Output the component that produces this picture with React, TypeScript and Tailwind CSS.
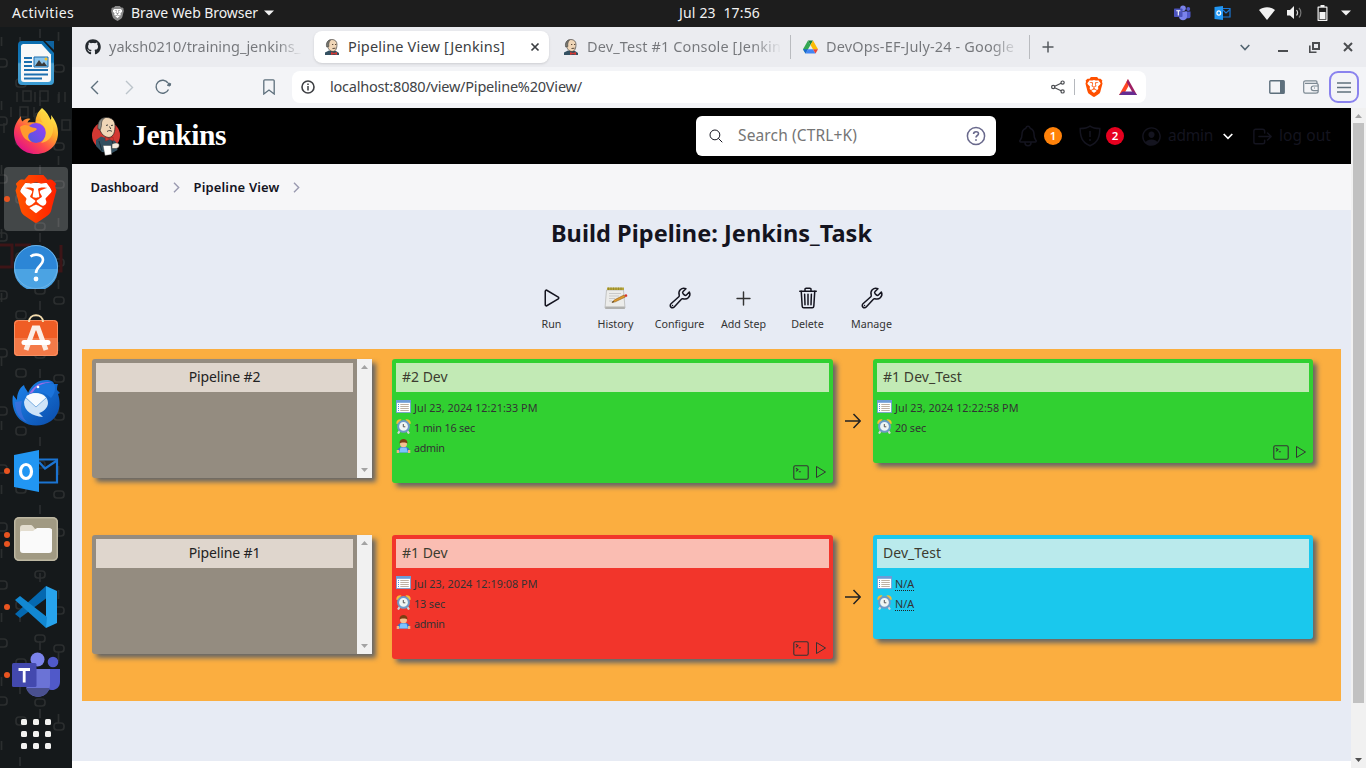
import type { ReactNode } from 'react';
import { FaGithub } from 'react-icons/fa';
import { SiBrave } from 'react-icons/si';
import {
  IoAddOutline,
  IoBuildOutline,
  IoHelpCircleOutline,
  IoLogOutOutline,
  IoNotificationsOutline,
  IoPersonCircleOutline,
  IoPlayOutline,
  IoSearchOutline,
  IoTrashOutline,
} from 'react-icons/io5';

/* ---------- shared drawings ---------- */

function BraveLogo({ size, from, to, id }: { size: number; from: string; to: string; id: string }) {
  return (
    <svg width={size} height={size} viewBox="0 0 24 24" className="shrink-0">
      <defs>
        <linearGradient id={id}>
          <stop offset="0" stopColor={from} />
          <stop offset="1" stopColor={to} />
        </linearGradient>
      </defs>
      <path d="M6 4h12l2 4-2 9-6 5-6-5-2-9z" fill="#fff" />
      <SiBrave size={24} style={{ fill: `url(#${id})` }} />
    </svg>
  );
}

function Butler() {
  return (
    <svg width="28" height="40" viewBox="0 0 28 40" className="shrink-0">
      <circle cx="14" cy="19.500" r="14" fill="#d33833" />
      <path d="M4 24l5-3.500 6 2 5 0 4 3.500 1.500 8-5.500 3-10-1-6-6z" fill="#335061" />
      <path d="M7 25l3 10M20 24l1 6" stroke="#1d2f3a" strokeWidth="1" />
      <path d="M6.500 9C6.500 4 10 1.500 14.500 1.500S23 4 23 9.500c0 6-1 11-6 12-6-.5-9-5-10.500-12.500z" fill="#f0d6b7" stroke="#222" strokeWidth=".7" />
      <path d="M6 13C5.300 6.500 8 2.300 13 1.500 10.500 3 9 6 9.500 9.500l-1 4z" fill="#8b8b86" stroke="#222" strokeWidth=".5" />
      <path d="M14 9.500l2-.6M19 9.500l2-.3M15 15.500c2-1.500 4-1 5 0M17.500 10.500l1.300 2.500" stroke="#333" strokeWidth=".9" fill="none" />
      <path d="M13 21l4 1.500 4-1.500.5 4-4-1.500-4 1.500z" fill="#d33833" stroke="#81211c" strokeWidth=".4" />
      <path d="M11 29.500h8l.7 9-6.700 1z" fill="#fff" stroke="#333" strokeWidth=".4" />
      <path d="M20 28c3-1.500 5.500-1.500 7 0 .5 2 0 4-3 4.500h-4z" fill="#f5ebdf" stroke="#333" strokeWidth=".5" />
    </svg>
  );
}

function ButlerHead() {
  return (
    <svg width="16" height="16" viewBox="0 0 16 16" className="shrink-0">
      <path d="M1 16v-2.500l4-2 7 .5 3 2V16z" fill="#335061" />
      <path d="M3 5C3 2 5 .5 8 .5s5 2 5 5-1 7-4 7-5.500-3-6-7.500z" fill="#f0d6b7" stroke="#2b2b2b" strokeWidth=".6" />
      <path d="M2.600 8C1.800 4 3.500 1.500 6.500 1 5 3 4.500 5 5 7.500z" fill="#77776f" stroke="#2b2b2b" strokeWidth=".4" />
      <path d="M8 5.500h1.300M11 5.500h1.300M8.500 9.500l3-.3" stroke="#4b3a2c" strokeWidth=".9" />
      <path d="M7 13l3 1 3-1v3l-3-1-3 1z" fill="#d33833" />
    </svg>
  );
}

function DriveIcon() {
  return (
    <svg width="15" height="14" viewBox="0 0 15 14" className="shrink-0">
      <path d="M5 .5h5L7.500 5z" fill="#188038" />
      <path d="M5 .5L0 9.300l2.500 4.200 5-8.500z" fill="#34a853" />
      <path d="M10 .5L15 9.300H10L7.500 5z" fill="#fbbc04" />
      <path d="M0 9.300h5l-2.500 4.200z" fill="#1967d2" />
      <path d="M5 9.300h5l2.500 4.200h-10z" fill="#4285f4" />
      <path d="M10 9.300h5l-2.500 4.200z" fill="#ea4335" />
    </svg>
  );
}

/* ---------- desktop top bar ---------- */

function TopBar() {
  return (
    <header className="flex h-[27px] shrink-0 items-center bg-[#1d1d1d] pb-[1px] text-[14px] leading-[24px] text-[#f2f2f2]">
      <span className="ml-3 w-[62px] whitespace-nowrap tracking-[0.37px]">Activities</span>
      <span className="ml-9">
        <BraveLogo size={15} from="#8c8c8c" to="#8c8c8c" id="brave-gray" />
      </span>
      <span className="ml-[6px] w-[127px] whitespace-nowrap tracking-[-0.07px]">Brave Web Browser</span>
      <svg width="10" height="6" viewBox="0 0 10 6" className="ml-[6px]"><path d="M0 .5h10L5 5.500z" fill="#f2f2f2" /></svg>
      <span className="ml-[405px] w-[82px] whitespace-pre tracking-[0.17px]">Jul 23  17:56</span>
      <svg width="17" height="16" viewBox="0 0 17 16" className="ml-[413px]">
        <circle cx="9" cy="3.200" r="2.800" fill="#7b83eb" />
        <circle cx="14.300" cy="4" r="1.900" fill="#5059c9" />
        <path d="M11 6.500h5.500v5c0 2-3.500 2.500-5.500 1z" fill="#5059c9" />
        <path d="M5 6.500h8v5c0 5-8 5-8 0z" fill="#7b83eb" />
        <rect x="0" y="3.500" width="8.500" height="8.500" rx=".7" fill="#4b53bc" />
        <path d="M2.300 5.800h4M4.300 5.800v4.600" stroke="#fff" strokeWidth="1.100" />
      </svg>
      <svg width="17" height="16" viewBox="0 0 17 16" className="ml-[23px]">
        <path d="M8 3.500h8v8.500H8z" fill="none" stroke="#1b78d6" strokeWidth="1.200" />
        <path d="M9 5l3 3 4-3.500" fill="none" stroke="#1b78d6" strokeWidth="1.200" />
        <path d="M.5 2L9 1v14l-8.500-1z" fill="#2196f3" />
        <ellipse cx="4.800" cy="8" rx="1.900" ry="2.200" fill="none" stroke="#fff" strokeWidth="1.200" />
      </svg>
      <svg width="16" height="13" viewBox="0 0 16 13" className="ml-[28px]"><path d="M0 3C4.500-.8 11.500-.8 16 3L8 13z" fill="#f2f2f2" /></svg>
      <svg width="16" height="14" viewBox="0 0 16 14" className="ml-[12px]">
        <path d="M0 4h3l4-4v13L3 9.500H0z" fill="#f2f2f2" />
        <path d="M9.500 4c1.200 1.500 1.200 4 0 5.500" fill="none" stroke="#cfcfcf" strokeWidth="1.200" />
        <path d="M12 2c2.500 2.500 2.500 7 0 9.500" fill="none" stroke="#777" strokeWidth="1.200" />
      </svg>
      <svg width="11" height="16" viewBox="0 0 11 16" className="ml-[14px]">
        <path d="M3.500 0h4v1.500h2c.8 0 1 .3 1 1V15c0 .7-.2 1-1 1h-8c-.8 0-1-.3-1-1V2.500c0-.7.2-1 1-1h2z" fill="#f2f2f2" />
        <path d="M1.700 2.700h7.600v12H1.700z" fill="#1d1d1d" />
        <path d="M2.500 7h6v7h-6z" fill="#f2f2f2" />
      </svg>
      <svg width="10" height="6" viewBox="0 0 10 6" className="ml-[13px]"><path d="M0 .5h10L5 5.500z" fill="#f2f2f2" /></svg>
    </header>
  );
}

/* ---------- dock ---------- */

function WriterIcon() {
  return (
    <svg width="38" height="46" viewBox="0 0 38 46">
      <defs>
        <linearGradient id="writer" x2="0" y2="1">
          <stop offset="0" stopColor="#0b6cae" /><stop offset=".48" stopColor="#1579b8" />
          <stop offset=".52" stopColor="#4d9fcd" /><stop offset="1" stopColor="#3a9bd3" />
        </linearGradient>
      </defs>
      <path d="M5 1h21l11 12v28a4 4 0 0 1-4 4H5a4 4 0 0 1-4-4V5a4 4 0 0 1 4-4z" fill="url(#writer)" />
      <path d="M28 1h9v9z" fill="#0f63a0" />
      <path d="M6.500 4h18L34 14.500V39a3 3 0 0 1-3 3H7a3 3 0 0 1-3-3V6.500C4 5 5 4 6.500 4z" fill="#f8f8f8" />
      <path d="M7 18h8M7 22h8M7 26h8M7 30h24M7 34.500h24M7 38.500h18" stroke="#1b6faf" strokeWidth="1.800" />
      <path d="M17 17h14v10H17z" fill="#8cc5ec" stroke="#1b6faf" />
      <path d="M18 26l4-6 3 4 2-2 3 4z" fill="#3a3a3a" />
      <circle cx="29" cy="19" r="1.500" fill="#f6c12c" />
    </svg>
  );
}

function FirefoxIcon() {
  return (
    <svg width="46" height="48" viewBox="0 0 46 48">
      <defs>
        <linearGradient id="ff-body" x1=".85" y1=".1" x2=".2" y2=".95">
          <stop offset="0" stopColor="#fff14f" /><stop offset=".35" stopColor="#ffa52a" />
          <stop offset=".65" stopColor="#ff4a4a" /><stop offset="1" stopColor="#e0108a" />
        </linearGradient>
        <linearGradient id="ff-globe" x1="1" x2="0" y2="1">
          <stop offset="0" stopColor="#9b3dfb" /><stop offset="1" stopColor="#4a5cd8" />
        </linearGradient>
      </defs>
      <path d="M29 1c5 4 7 8 8.500 12 1-1 .8-3 .5-5 5 6 7 12 7 18 0 12-9 21-22 21S1 38 1 26C1 19 4 14 8 9c0 2 0 4 1.500 5.500 3-3 5-3.500 8-2.500-1.500 1-2.500 2-3 3.500 2-.5 5-.5 8 0 0-6 2.500-11 6.500-14.500z" fill="url(#ff-body)" />
      <circle cx="23" cy="26" r="10" fill="url(#ff-globe)" />
      <path d="M7 20c4-3 8-2 11 0 2 1 4 0 6 2-2 3-6 3-8 5-2 3 0 6 3 8-7-1-11-7-12-15z" fill="#ff9a2e" />
      <path d="M22 15c4 0 8 2 10 6 2 5 0 11-4 15 8-1 13-8 12-16s-6-12-10-16c-4 4-3 8 0 12-2-1-5-2-8-1z" fill="#ffd23e" opacity=".75" />
    </svg>
  );
}

function HelpIcon() {
  return (
    <svg width="44" height="44" viewBox="0 0 44 44">
      <circle cx="22" cy="22" r="22" fill="#2c86d6" />
      <path d="M0 24h44a22 22 0 0 1-44 0z" fill="#4ba3e3" />
      <circle cx="22" cy="22" r="21.500" fill="none" stroke="#6db3e6" />
      <path d="M16.500 11.500c4-3 12.500-2.500 12.500 3.500 0 6-7 6-7 13" fill="none" stroke="#fff" strokeWidth="2.600" />
      <circle cx="22" cy="34" r="2.400" fill="#fff" />
    </svg>
  );
}

function SoftwareIcon() {
  return (
    <svg width="44" height="44" viewBox="0 0 44 44">
      <rect y="7" width="44" height="36" rx="4" fill="#ef5d25" />
      <path d="M0 25h44v14a4 4 0 0 1-4 4H4a4 4 0 0 1-4-4z" fill="#f47a48" />
      <rect x=".5" y="7.500" width="43" height="35" rx="4" fill="none" stroke="#f89165" />
      <path d="M15 9c0-9 14-9 14 0" fill="none" stroke="#f3dcae" strokeWidth="2" />
      <path d="M12 37l8-22h4l8 22" fill="none" stroke="#fbeee6" strokeWidth="5" />
      <path d="M10 29.500h24" stroke="#fff" strokeWidth="5" strokeLinecap="round" />
    </svg>
  );
}

function ThunderbirdIcon() {
  return (
    <svg width="48" height="46" viewBox="0 0 48 46">
      <defs>
        <linearGradient id="tb" x2="1" y2="1"><stop offset="0" stopColor="#1e88f0" /><stop offset="1" stopColor="#0a4aa8" /></linearGradient>
      </defs>
      <path d="M16 13c4-9 10-13 18-13 5 0 8 2 8 4h4c-1 2-1 4-1 6l3 3-2 1c4 12 0 22-7 27-9 6-21 6-29 0C3 36-1 26 1 15l4 5c0-6 2-12 7-15 1 4 4 6 4 8z" fill="url(#tb)" />
      <path d="M17 14c5-9 13-14 25-11-9-1-13 2-16 7z" fill="#9c6be6" />
      <path d="M21 12c5-8 12-10 21-8 2 4 1 9-3 14-5-5-11-7-18-6z" fill="#1b74dc" />
      <path d="M3 22c0 10 4 17 12 20C9 36 8 28 10 21z" fill="#4c6fe0" opacity=".6" />
      <circle cx="26" cy="7" r="1.300" fill="#fff" />
      <path d="M12 22c2-7 6-9 12-9 7 0 12 4 12 10 0 5-5 9-9 10l4 4c-11-1-19-6-19-15z" fill="#cfe4f8" />
      <path d="M14 17l10 10 10-9c-5-6-15-6-20-1z" fill="#f6fbff" />
      <path d="M14 18l10 9 10-9" fill="none" stroke="#7fb2e2" />
    </svg>
  );
}

function OutlookIcon() {
  return (
    <svg width="46" height="44" viewBox="0 0 46 44">
      <path d="M20 10.500h24v23H20z" fill="none" stroke="#1b74d2" strokeWidth="2.200" />
      <path d="M26 13l6 6.500 12-8" fill="none" stroke="#1b74d2" strokeWidth="2.200" />
      <path d="M1 6l25-5v42L1 38z" fill="#2196f3" />
      <ellipse cx="13" cy="22.500" rx="5.500" ry="7" fill="none" stroke="#fff" strokeWidth="3.200" />
    </svg>
  );
}

function FilesIcon() {
  return (
    <svg width="44" height="44" viewBox="0 0 44 44">
      <rect width="44" height="44" rx="5" fill="#a19a83" />
      <rect x=".7" y=".7" width="42.600" height="42.600" rx="4.500" fill="none" stroke="#bdb7a2" strokeWidth="1.400" />
      <path d="M6 30V11c0-2 1-3 3-3h8c2 0 3 4 5 4h16v18z" fill="#e3ddcf" />
      <path d="M6 16c0-1.500.5-2 2-2h11l4-3h12c2 0 3 1 3 3v19c0 2-1 3-3 3H9c-2 0-3-1-3-3z" fill="#fafafa" />
    </svg>
  );
}

function CodeIcon() {
  return (
    <svg width="42" height="42" viewBox="0 0 42 42">
      <path d="M31 0l2 11L5 32l-5-4z" fill="#0468b0" />
      <path d="M31 0l11 5v32l-11 5z" fill="#27a3ec" />
      <path d="M5 10L32 31l-1 11L0 14z" fill="#1288d2" />
    </svg>
  );
}

function TeamsIcon() {
  return (
    <svg width="48" height="46" viewBox="0 0 48 46">
      <circle cx="25.500" cy="7.500" r="7" fill="#7b83eb" />
      <circle cx="41" cy="10" r="5.300" fill="#5059c9" />
      <path d="M30 17h18v13c0 9-12 11-16 3z" fill="#5059c9" />
      <path d="M14 17h24v15c0 17-24 17-24 0z" fill="#6b73d6" />
      <path d="M14 36h23.500c-3 12-20 11-23.500 0z" fill="#4a508f" />
      <rect y="11" width="24.500" height="24" rx="1.500" fill="#4349ae" />
      <path d="M6.500 17.500h11.500M12.200 17.500v13" stroke="#fff" strokeWidth="2.800" />
    </svg>
  );
}

function DockItem({ children, dots = 0, active = false }: { children: ReactNode; dots?: number; active?: boolean }) {
  return (
    <div className="flex h-[68px] items-center">
      <div className={active ? 'ml-1 flex h-16 w-16 items-center rounded bg-white/20' : 'ml-1 flex h-16 w-16 items-center rounded'}>
        <div className="flex w-[6px] shrink-0 flex-col items-center gap-[3px]">
          {Array.from({ length: dots }, (_, i) => (
            <span key={i} className="h-[6px] w-[6px] rounded-full bg-[#e95420]" />
          ))}
        </div>
        <div className="flex w-[52px] shrink-0 items-center justify-center">{children}</div>
      </div>
    </div>
  );
}

function Dock() {
  const ovals = [0, 1, 2, 3, 4, 5, 6, 7, 8, 9, 10, 11];
  return (
    <aside className="relative w-[72px] shrink-0 overflow-hidden bg-[#15191b]">
      <svg width="72" height="741" viewBox="0 0 72 741" className="absolute inset-0" fill="none" stroke="#2b2e2f" strokeWidth="1.700">
        {ovals.map((n) => (
          <g key={n}>
            <rect x="-4" y={32 + n * 58} width="11" height="8" rx="3" />
            <rect x="35" y={22 + n * 58 + (n % 3) * 6} width="10" height="7" rx="3" />
            <rect x="16" y={52 + n * 58} width="10" height="8" rx="3" />
            <rect x="54" y={38 + n * 58 + (n % 2) * 20} width="10" height="7" rx="3" />
            <path d={`M58.500 ${5 + n * 62}v9M20 ${10 + n * 72}v9M1.500 ${10 + n * 64}v9M40 ${2 + n * 68}v9`} />
          </g>
        ))}
        <path d="M17 65v10M23 64h8v10h-8zM35 65v10M40 64h8v10h-8zM59 65v10M65 65v10M11 80v10M20 80h8v10h-8zM34 80v10M4 96v10M62 93h8v10h-8z" strokeWidth="1.500" />
        <path d="M0 218h12v22H0M15 218h16M61 218v26h-8" stroke="#3d1517" strokeWidth="3" />
      </svg>
      <div className="relative flex flex-col pt-[2px]">
        <DockItem><WriterIcon /></DockItem>
        <DockItem><FirefoxIcon /></DockItem>
        <DockItem dots={1} active><BraveLogo size={48} from="#ff5500" to="#ff2000" id="brave-dock" /></DockItem>
        <DockItem><HelpIcon /></DockItem>
        <DockItem><SoftwareIcon /></DockItem>
        <DockItem><ThunderbirdIcon /></DockItem>
        <DockItem dots={1}><OutlookIcon /></DockItem>
        <DockItem dots={2}><FilesIcon /></DockItem>
        <DockItem dots={1}><CodeIcon /></DockItem>
        <DockItem dots={1}><TeamsIcon /></DockItem>
        <div className="ml-[21px] mt-[10px] grid w-[30px] grid-cols-3 gap-[6px]">
          {Array.from({ length: 9 }, (_, i) => (
            <span key={i} className="h-[6px] w-[6px] rounded-[1.5px] bg-[#f2f2f0]" />
          ))}
        </div>
      </div>
    </aside>
  );
}

/* ---------- browser chrome ---------- */

function TabStrip() {
  return (
    <div className="flex h-10 items-center bg-[#ebecf0] text-[14.5px] leading-5 text-[#75777b]">
      <FaGithub size={16} color="#24292e" className="ml-[13px] shrink-0" />
      <span className="mb-[2px] ml-2 w-[197px] whitespace-nowrap bg-gradient-to-r from-[#75777b] from-85% to-[#ebecf0] to-98% bg-clip-text tracking-[-0.01px] text-transparent">
        yaksh0210/training_jenkins_
      </span>
      <div className="ml-2 flex h-8 w-[235px] items-center rounded-lg bg-white shadow-sm">
        <span className="ml-[10px]"><ButlerHead /></span>
        <span className="mb-[2px] ml-2 w-[159px] whitespace-nowrap tracking-[0.18px] text-[#3c3e42]">Pipeline View [Jenkins]</span>
        <svg width="10" height="10" viewBox="0 0 10 10" className="ml-[23px]"><path d="M1.500 1.500l7 7M8.500 1.500l-7 7" stroke="#3b3e42" strokeWidth="1.700" /></svg>
      </div>
      <span className="ml-[14px]"><ButlerHead /></span>
      <span className="mb-[2px] ml-2 w-[195px] whitespace-nowrap bg-gradient-to-r from-[#75777b] from-85% to-[#ebecf0] bg-clip-text tracking-[0.12px] text-transparent">
        Dev_Test #1 Console [Jenkin
      </span>
      <span className="ml-2 h-6 w-px bg-[#b9bbbf]" />
      <span className="ml-3"><DriveIcon /></span>
      <span className="mb-[2px] ml-2 w-[194px] whitespace-nowrap bg-gradient-to-r from-[#75777b] from-85% to-[#ebecf0] bg-clip-text tracking-[0.14px] text-transparent">
        DevOps-EF-July-24 - Google
      </span>
      <span className="ml-[9px] h-6 w-px bg-[#b9bbbf]" />
      <svg width="12" height="12" viewBox="0 0 12 12" className="ml-3"><path d="M6 .5v11M.5 6h11" stroke="#56595d" strokeWidth="1.500" /></svg>
      <svg width="10" height="7" viewBox="0 0 10 7" className="ml-[186px]"><path d="M.7 1L5 5.500 9.300 1" fill="none" stroke="#536571" strokeWidth="1.600" /></svg>
      <svg width="10" height="2" viewBox="0 0 10 2" className="ml-7 mt-[7px]"><path d="M0 1h10" stroke="#4b4d50" strokeWidth="2" /></svg>
      <svg width="11" height="11" viewBox="0 0 11 11" className="ml-[21px]" fill="none" stroke="#4b4d50">
        <path d="M4 1h6v6H4z" strokeWidth="2" /><path d="M.8 3.500v6.700h6.700" strokeWidth="1.600" />
      </svg>
      <svg width="10" height="10" viewBox="0 0 10 10" className="ml-[23px]"><path d="M1 1l8 8M9 1L1 9" stroke="#4b4d50" strokeWidth="2" /></svg>
    </div>
  );
}

function Toolbar() {
  return (
    <div className="flex h-[41px] items-start bg-[#f3f4f7] pt-1">
      <div className="flex h-8 w-[220px] items-center">
        <svg width="9" height="15" viewBox="0 0 9 15" className="ml-[18px]"><path d="M8 1L1.500 7.500 8 14" fill="none" stroke="#5d6f7c" strokeWidth="1.400" /></svg>
        <svg width="9" height="15" viewBox="0 0 9 15" className="ml-[26px]"><path d="M1 1l6.500 6.500L1 14" fill="none" stroke="#bcc4ca" strokeWidth="1.400" /></svg>
        <svg width="17" height="16" viewBox="0 0 17 16" className="ml-[21px]">
          <path d="M13.500 10.500A6.500 6.500 0 1 1 13 4" fill="none" stroke="#5d6f7c" strokeWidth="1.400" />
          <path d="M13.800 4l2 .8-.8 2.200-2.500-.5z" fill="#5d6f7c" stroke="#5d6f7c" strokeWidth="1" />
        </svg>
        <svg width="12" height="16" viewBox="0 0 12 16" className="ml-[91px]"><path d="M1.800.8h8.400c.6 0 1 .3 1 1V15L6 11 .8 15V1.800c0-.7.400-1 1-1z" fill="none" stroke="#5d6f7c" strokeWidth="1.300" /></svg>
      </div>
      <div className="flex h-8 w-[854px] items-center rounded-lg bg-white">
        <svg width="14" height="14" viewBox="0 0 14 14" className="ml-[9px]">
          <circle cx="7" cy="7" r="6" fill="none" stroke="#3d3f43" strokeWidth="1.600" /><path d="M7 6v4.500M7 3.500v1.600" stroke="#3d3f43" strokeWidth="1.500" />
        </svg>
        <span className="mb-[2px] ml-[15px] w-[253px] whitespace-nowrap text-[14.5px] leading-5 tracking-[-0.21px] text-[#414347]">localhost:8080/view/Pipeline%20View/</span>
        <svg width="14" height="14" viewBox="0 0 14 14" className="ml-[468px]" fill="none" stroke="#4a4c50" strokeWidth="1.200">
          <circle cx="2.200" cy="7" r="1.600" /><circle cx="11.600" cy="2.600" r="1.600" /><circle cx="11.600" cy="11.400" r="1.600" /><path d="M3.700 6.300l6.400-3M3.700 7.700l6.400 3" />
        </svg>
        <span className="ml-[9px] h-4 w-px bg-[#b5b8bd]" />
        <span className="ml-[9px]"><BraveLogo size={20} from="#ff5000" to="#ff5000" id="brave-bar" /></span>
        <svg width="18" height="16" viewBox="0 0 18 16" className="ml-[15px]">
          <path d="M9 0L0 16h4.500L9.500 7z" fill="#ff4724" /><path d="M9 0l9 16h-3L7.500 3z" fill="#9e1f63" /><path d="M0 16l3.500-3.500h11L18 16z" fill="#662d91" />
        </svg>
      </div>
      <svg width="16" height="14" viewBox="0 0 16 14" className="ml-[123px] mt-[9px]"><rect x=".8" y=".8" width="14.400" height="12.400" rx=".8" fill="none" stroke="#5d6f7c" strokeWidth="1.400" /><path d="M11 1h4v12h-4z" fill="#5d6f7c" /></svg>
      <svg width="16" height="14" viewBox="0 0 16 14" className="ml-[18px] mt-[9px]" fill="none" stroke="#7c8993" strokeWidth="1.200">
        <path d="M14 3V2c0-.8-.5-1.200-1.200-1.200H2.500C1.500.8.7 1.500.7 2.500v9c0 1 .7 1.700 1.600 1.700h10.500c1.400 0 2.400-.7 2.400-1.900V5.200c0-1.200-1-1.900-2-1.900H2" />
        <path d="M15 6h-4.500a2.300 2.300 0 0 0 0 4.600H15M11 8h1" />
      </svg>
      <div className="ml-[10px] flex h-8 w-[30px] items-center justify-center rounded-[9px] border-2 border-[#8a83ee]">
        <svg width="14" height="11" viewBox="0 0 14 11"><path d="M0 1h14M0 5.500h14M0 10h14" stroke="#60717d" strokeWidth="1.300" /></svg>
      </div>
    </div>
  );
}

/* ---------- Jenkins page ---------- */

function JenkinsHeader() {
  return (
    <div className="flex h-14 items-center bg-black text-[15.5px] text-[#14141f]">
      <span className="ml-5"><Butler /></span>
      <span className="mb-[3px] ml-3 w-[96px] whitespace-nowrap font-['Liberation_Serif',serif] text-[29.5px] font-bold leading-8 tracking-[-0.36px] text-white">Jenkins</span>
      <div className="ml-[468px] flex h-10 w-[300px] items-center rounded-md bg-white">
        <IoSearchOutline size={16} className="ml-3 shrink-0" />
        <span className="ml-[14px] w-[120px] whitespace-nowrap tracking-[0.13px] text-[#757575]">Search (CTRL+K)</span>
        <svg width="20" height="20" viewBox="0 0 20 20" className="ml-[108px] shrink-0" fill="none" stroke="#69698c" strokeWidth="1.500">
          <circle cx="10" cy="10" r="8.600" />
          <path d="M7.600 8c0-3 4.900-3 4.900-.3 0 1.900-2.500 1.700-2.500 3.800" strokeWidth="1.600" />
          <circle cx="10" cy="14" r=".6" fill="#69698c" strokeWidth=".8" />
        </svg>
      </div>
      <IoNotificationsOutline size={24} className="ml-5 shrink-0" />
      <span className="ml-1 flex h-[18px] w-[18px] items-center justify-center rounded-full bg-[#ff820a] text-[11.5px] font-semibold text-white">1</span>
      <svg width="22" height="22" viewBox="0 0 22 22" className="ml-[17px]" fill="none" stroke="#14141f" strokeWidth="1.500">
        <path d="M11 1.200C8.500 3 5 3.600 1.200 3.600c0 8 1.500 13.500 9.800 17.200 8.300-3.700 9.800-9.200 9.800-17.200C17 3.600 13.500 3 11 1.200zM11 6v6M11 14v2" />
      </svg>
      <span className="ml-[5px] flex h-[18px] w-[18px] items-center justify-center rounded-full bg-[#e6001f] text-[11.5px] font-semibold text-white">2</span>
      <IoPersonCircleOutline size={23} className="ml-4 shrink-0" />
      <span className="ml-[5px] w-[45px] whitespace-nowrap tracking-[-0.26px]">admin</span>
      <svg width="10" height="7" viewBox="0 0 10 7" className="ml-[10px]"><path d="M.7 1L5 5.300 9.300 1" fill="none" stroke="#fff" strokeWidth="1.700" /></svg>
      <IoLogOutOutline size={23} className="ml-[18px] shrink-0" />
      <span className="ml-[5px] whitespace-nowrap tracking-[0.07px]">log out</span>
    </div>
  );
}

function Crumb() {
  return <svg width="7" height="11" viewBox="0 0 7 11"><path d="M1 .8l4.700 4.700L1 10.200" fill="none" stroke="#9a9ab0" strokeWidth="1.400" /></svg>;
}

function Breadcrumbs() {
  return (
    <div className="flex h-[46px] items-center bg-[#f6f6f8] text-[13px] font-semibold text-[#14141f]">
      <span className="ml-[18.5px] mt-[2px] w-[68px] whitespace-nowrap tracking-[-0.12px]">Dashboard</span>
      <span className="ml-[14px]"><Crumb /></span>
      <span className="ml-[14px] mt-[2px] w-[86px] whitespace-nowrap tracking-[0.15px]">Pipeline View</span>
      <span className="ml-[13px]"><Crumb /></span>
    </div>
  );
}

function HistoryIcon() {
  return (
    <svg width="24" height="24" viewBox="0 0 24 24">
      <path d="M2.500 4h17l1.500 18H1z" fill="#ececea" stroke="#b9b9b6" strokeWidth=".8" />
      <path d="M1.300 20.500h19.500V23H1.300z" fill="#b0b0ae" />
      <path d="M3 1.500h17V4H3z" fill="#b5a53a" />
      <path d="M4.500 1.500v2.500M7 1.500v2.500M9.500 1.500v2.500M12 1.500v2.500M14.500 1.500v2.500M17 1.500v2.500" stroke="#8b7d26" strokeWidth=".7" />
      <path d="M5 7.500h12M5 10h10M5 12.500h6M5 15h3" stroke="#c9c9c9" />
      <path d="M8 16.500l2.500-2.700 9.500-4.800 1.300 2-10 4.800z" fill="#e09a2b" stroke="#8a5a17" strokeWidth=".6" />
      <path d="M20.300 9l2-1 1.200 2-1.700 1.300z" fill="#d8342a" />
      <path d="M8 16.500l1-1.600 1 1.200z" fill="#222" />
    </svg>
  );
}

function Action({ label, children }: { label: string; children: ReactNode }) {
  return (
    <div className="flex w-16 flex-col items-center">
      <div className="flex h-6 items-center justify-center">{children}</div>
      <span className="mt-[6px] whitespace-nowrap text-[10.7px] leading-4 text-[#333]">{label}</span>
    </div>
  );
}

function CalendarIcon() {
  return (
    <svg width="15" height="13" viewBox="0 0 15 13" className="mb-[2px] shrink-0">
      <rect x=".4" y=".4" width="14.200" height="12.200" fill="#fff" stroke="#6f9ad0" strokeWidth=".8" />
      <path d="M0 0h15v2.800H0z" fill="#6c9bd6" />
      <path d="M2 4.500h1M2 6.500h1M2 8.500h1M2 10.500h1" stroke="#4a90e2" />
      <path d="M4.300 4.500h8.500M4.300 6.500h8.500M4.300 8.500h8.500M4.300 10.500h8.500" stroke="#b5a898" strokeWidth=".9" />
    </svg>
  );
}

function ClockIcon() {
  return (
    <svg width="15" height="15" viewBox="0 0 15 15" className="mb-[2px] shrink-0">
      <path d="M4 11.500l-2 3M11 11.500l2 3" stroke="#d5d5d5" strokeWidth="2.200" />
      <path d="M.3 4.800C0 1.500 2.300-.2 5.500.3L2.500 5z" fill="#f6bd35" /><path d="M14.700 4.800c.3-3.300-2-5-5.200-4.500L12.500 5z" fill="#f6bd35" />
      <circle cx="7.500" cy="7.400" r="5.400" fill="#eff5f3" stroke="#6d9ac8" strokeWidth="2" />
      <path d="M7.300 5v2.800h2" fill="none" stroke="#555" />
    </svg>
  );
}

function UserIcon() {
  return (
    <svg width="15" height="15" viewBox="0 0 15 15" className="mb-[2px] shrink-0">
      <path d="M1 13.500c0-3.500 2-5 4-5.500h5c2 .5 4 2 4 5.500z" fill="#3671c7" />
      <path d="M4.500 8.500h6l1.500 5H3z" fill="#7cc3ff" /><path d="M.7 11h2.300v3H.7zM12 11h2.300v3H12z" fill="#edb483" />
      <circle cx="7.500" cy="4.800" r="3.500" fill="#f4c091" />
      <path d="M3.500 4.500c-.3-6 8.300-6 8 0-1-1.500-7-1.500-8 0z" fill="#7a3d12" />
    </svg>
  );
}

function CardActions() {
  return (
    <div className="mr-[2px] mt-auto flex h-[22px] items-center justify-end gap-[6px] text-[#333]">
      <svg width="16" height="15" viewBox="0 0 16 15" fill="none" stroke="currentColor" strokeWidth="1.100">
        <rect x=".8" y=".8" width="14.400" height="13.400" rx="1.500" /><path d="M3 3.200l2 1.600-2 1.600M5.800 6.700h2" />
      </svg>
      <svg width="12" height="14" viewBox="0 0 12 14" fill="none" stroke="currentColor" strokeWidth="1"><path d="M1.500 1.500v11L10.500 7z" strokeLinejoin="round" /></svg>
    </div>
  );
}

type Meta = { icon: 'date' | 'clock' | 'user'; text: string; na?: boolean; track?: string };

function BuildCard({ title, frame, band, meta, actions = true }: { title: string; frame: string; band: string; meta: Meta[]; actions?: boolean }) {
  return (
    <div className={`flex flex-col rounded-[3px] p-1 pb-0 shadow-[4px_4px_5px_#666] ${frame}`}>
      <div className={`h-[29px] shrink-0 pl-[6px] text-[14px] leading-[27px] text-[#3c3c30] ${band}`}>{title}</div>
      <div className="mt-[5px] flex flex-col">
        {meta.map((m) => (
          <div key={m.icon} className="flex h-5 items-center gap-[3px] text-[10.8px] leading-[14px] text-[#333]">
            {m.icon === 'date' && <CalendarIcon />}
            {m.icon === 'clock' && <ClockIcon />}
            {m.icon === 'user' && <UserIcon />}
            <span className={`mt-[2px] whitespace-nowrap ${m.track ?? ''} ${m.na ? 'h-[14px] border-b border-dotted border-[#222]' : ''}`}>{m.text}</span>
          </div>
        ))}
      </div>
      {actions && <CardActions />}
    </div>
  );
}

function PipelineBox({ name }: { name: string }) {
  return (
    <div className="flex h-[119px] w-[280px] shrink-0 rounded-l-[3px] bg-[#948c80] shadow-[4px_4px_5px_#666]">
      <div className="w-[265px] p-1">
        <div className="h-[29px] bg-[#dfd6cd] text-center text-[14px] leading-[27px] tracking-[-0.14px] text-[#222]">{name}</div>
      </div>
      <div className="flex w-[15px] flex-col items-center justify-between bg-[#f1f1f1] py-[6px]">
        <svg width="7" height="4" viewBox="0 0 7 4"><path d="M0 4h7L3.500 0z" fill="#a3a3a3" /></svg>
        <svg width="7" height="4" viewBox="0 0 7 4"><path d="M0 0h7L3.500 4z" fill="#a3a3a3" /></svg>
      </div>
    </div>
  );
}

function Row({ name, children }: { name: string; children: ReactNode }) {
  return (
    <div className="flex h-[176px] items-start pl-[10px] pt-[10px]">
      <PipelineBox name={name} />
      {children}
    </div>
  );
}

function Arrow() {
  return (
    <div className="flex h-[124px] w-10 shrink-0 items-center justify-center">
      <svg width="16" height="16" viewBox="0 0 16 16" fill="none" stroke="#222" strokeWidth="1.500">
        <path d="M0 8h15M8.500 1L15.200 8 8.500 15" />
      </svg>
    </div>
  );
}

function Page() {
  return (
    <main className="flex h-[551px] flex-col bg-[#e7ebf4]">
      <h1 className="mt-[5px] text-center text-[23.5px] font-bold leading-9 tracking-[0.04px] text-[#14141f]">Build Pipeline: Jenkins_Task</h1>
      <div className="mt-[35px] flex h-[63px] justify-center text-[#14141f]">
        <Action label="Run"><IoPlayOutline size={24} /></Action>
        <Action label="History"><HistoryIcon /></Action>
        <Action label="Configure"><IoBuildOutline size={24} /></Action>
        <Action label="Add Step"><IoAddOutline size={23} color="#333" /></Action>
        <Action label="Delete"><IoTrashOutline size={24} /></Action>
        <Action label="Manage"><IoBuildOutline size={24} /></Action>
      </div>
      <section className="mx-[10px] h-[352px] bg-[#fbae40]">
        <Row name="Pipeline #2">
          <div className="w-5 shrink-0" />
          <BuildCard
            title="#2 Dev"
            frame="h-[124px] w-[441px] bg-[#31d031]"
            band="bg-[#c2eab5] tracking-[-0.02px]"
            meta={[
              { icon: 'date', text: 'Jul 23, 2024 12:21:33 PM', track: 'tracking-[0.03px]' },
              { icon: 'clock', text: '1 min 16 sec', track: 'tracking-[-0.16px]' },
              { icon: 'user', text: 'admin', track: 'tracking-[-0.35px]' },
            ]}
          />
          <Arrow />
          <BuildCard
            title="#1 Dev_Test"
            frame="h-[104px] w-[440px] bg-[#31d031]"
            band="bg-[#c2eab5] tracking-[0.06px]"
            meta={[
              { icon: 'date', text: 'Jul 23, 2024 12:22:58 PM', track: 'tracking-[0.03px]' },
              { icon: 'clock', text: '20 sec', track: 'tracking-[-0.1px]' },
            ]}
          />
        </Row>
        <Row name="Pipeline #1">
          <div className="w-5 shrink-0" />
          <BuildCard
            title="#1 Dev"
            frame="h-[124px] w-[441px] bg-[#f2352b]"
            band="bg-[#fabdb2] tracking-[-0.02px]"
            meta={[
              { icon: 'date', text: 'Jul 23, 2024 12:19:08 PM', track: 'tracking-[0.03px]' },
              { icon: 'clock', text: '13 sec', track: 'tracking-[-0.1px]' },
              { icon: 'user', text: 'admin', track: 'tracking-[-0.35px]' },
            ]}
          />
          <Arrow />
          <BuildCard
            title="Dev_Test"
            frame="h-[104px] w-[440px] bg-[#1ac8ed]"
            band="bg-[#baeaec] tracking-[0.05px]"
            actions={false}
            meta={[
              { icon: 'date', text: 'N/A', na: true },
              { icon: 'clock', text: 'N/A', na: true },
            ]}
          />
        </Row>
      </section>
    </main>
  );
}

function PageScrollbar() {
  return (
    <div className="flex w-[15px] shrink-0 flex-col items-center bg-[#f1f1f1]">
      <svg width="7" height="4" viewBox="0 0 7 4" className="mt-[6px]"><path d="M0 4h7L3.500 0z" fill="#a3a3a3" /></svg>
      <div className="mt-[5px] h-[580px] w-[11px] bg-[#c1c1c1]" />
      <svg width="7" height="4" viewBox="0 0 7 4" className="mb-[6px] mt-auto"><path d="M0 0h7L3.500 4z" fill="#505050" /></svg>
    </div>
  );
}

export default function App() {
  return (
    <div className="flex h-[768px] w-[1366px] flex-col overflow-hidden font-['Noto_Sans',sans-serif]">
      <TopBar />
      <div className="flex min-h-0 flex-1">
        <Dock />
        <div className="flex min-w-0 flex-1 flex-col">
          <TabStrip />
          <Toolbar />
          <div className="flex min-h-0 flex-1">
            <div className="w-[1279px] bg-white">
              <JenkinsHeader />
              <Breadcrumbs />
              <Page />
            </div>
            <PageScrollbar />
          </div>
        </div>
      </div>
    </div>
  );
}
